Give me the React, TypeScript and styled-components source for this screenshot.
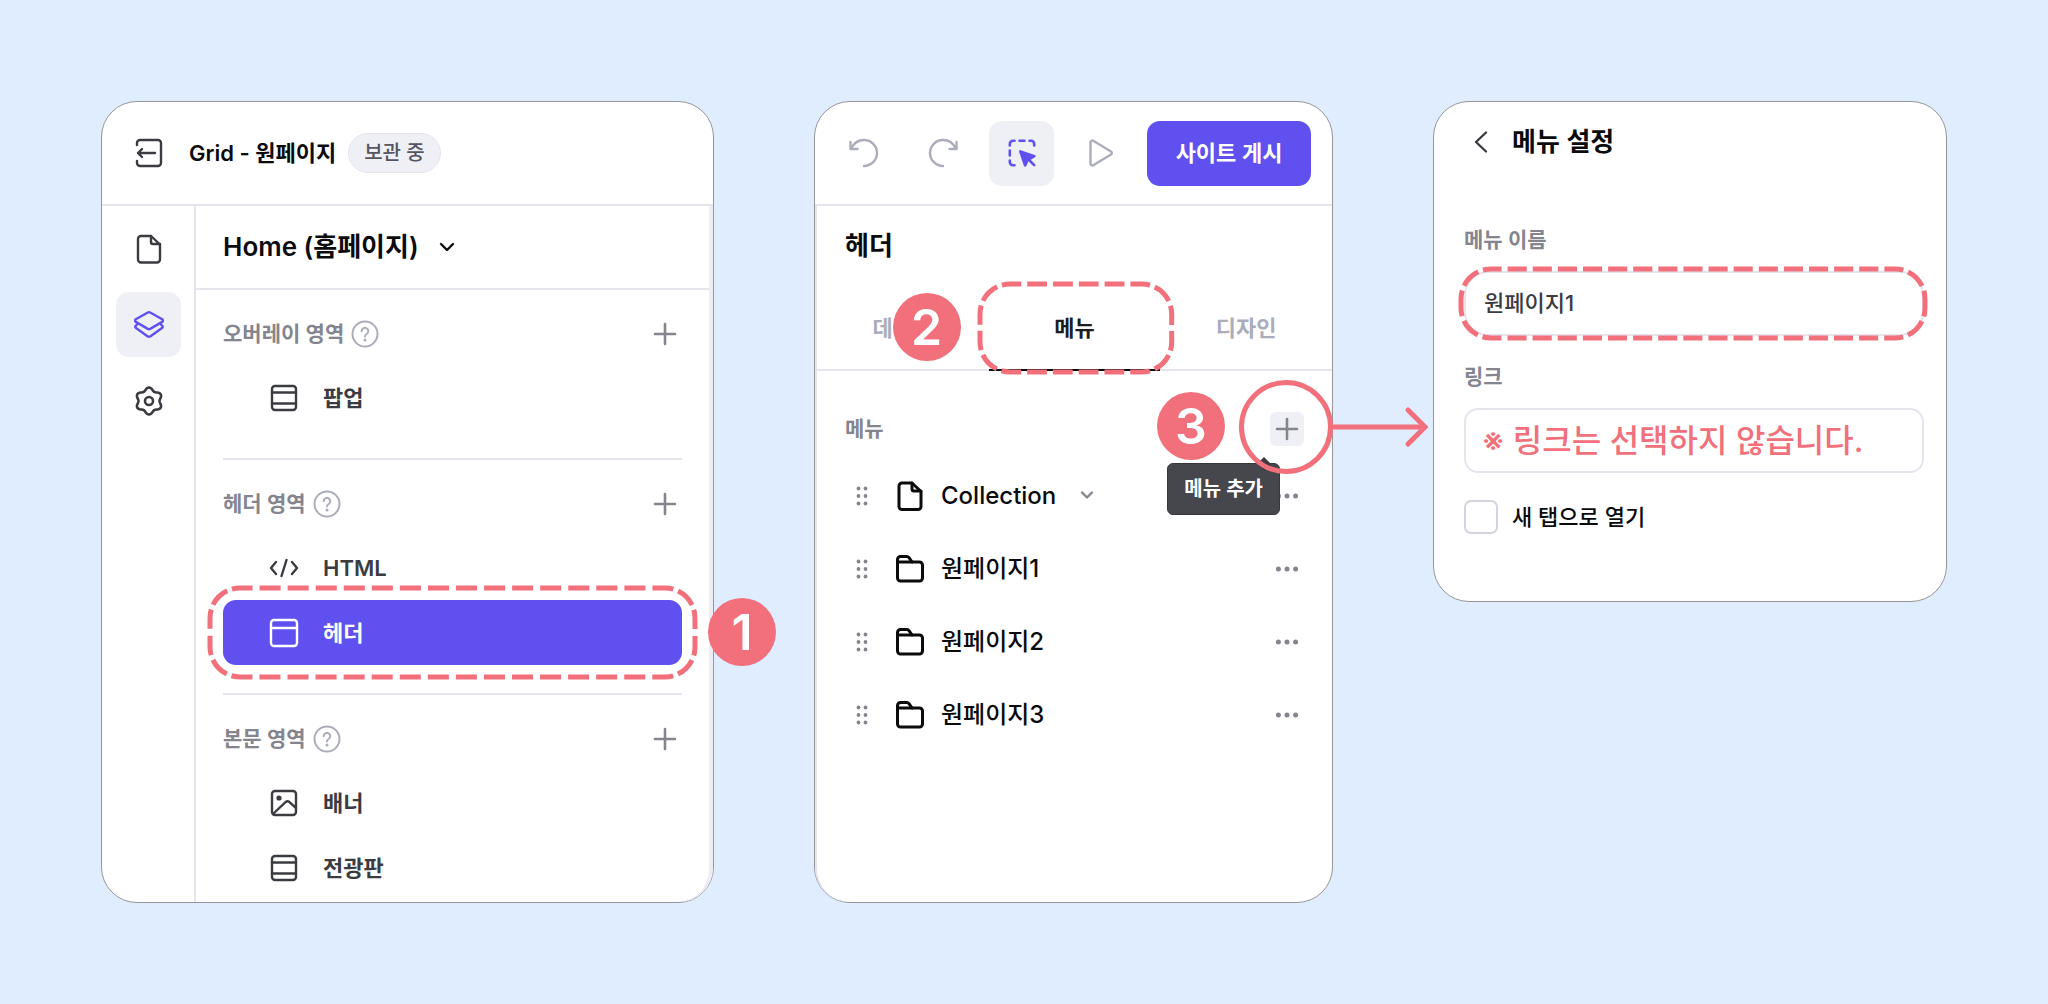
import React from "react";
import styled, { createGlobalStyle, css } from "styled-components";

const color = {
  page: "#e0edff",
  ink: "#0b0b0d",
  text: "#3b3c42",
  muted: "#84858f",
  faint: "#abadbb",
  line: "#e6e5ee",
  soft: "#eff0f5",
  brand: "#5f50ef",
  mark: "#f1707b",
  frame: "#969696",
};

const GlobalStyle = createGlobalStyle`
  *, *::before, *::after { box-sizing: border-box; }
  body {
    margin: 0;
    background: ${color.page};
    color: ${color.ink};
    font-family: Inter, "Noto Sans CJK KR", sans-serif;
    font-size: 22px;
    line-height: 32px;
  }
  button, input, select { font: inherit; color: inherit; }
  button { padding: 0; border: 0; background: none; cursor: pointer; }
  h1, h2, h3, p, ul { margin: 0; padding: 0; font: inherit; }
  ul { list-style: none; }
  svg { display: block; flex: none; }
`;

/* ---------- icons ---------- */

const gearOutline = (() => {
  const points: string[] = [];
  for (let i = 0; i < 120; i++) {
    const a = (i / 120) * Math.PI * 2;
    const r = 12 + 1.5 * Math.cos(6 * a);
    points.push(`${(15 + r * Math.sin(a)).toFixed(2)} ${(15 - r * Math.cos(a)).toFixed(2)}`);
  }
  return `M${points.join("L")}Z`;
})();

const glyphs = {
  exit: (
    <>
      <path d="M3 7V5a3 3 0 0 1 3-3h18a3 3 0 0 1 3 3v20a3 3 0 0 1-3 3H6a3 3 0 0 1-3-3v-2" />
      <path d="M21 15H4M8 11l-4 4 4 4" />
    </>
  ),
  page: (
    <>
      <path d="M7 2h10l9 8.500v15a3 3 0 0 1-3 3H7a3 3 0 0 1-3-3V5a3 3 0 0 1 3-3Z" />
      <path d="M17 2v6a2 2 0 0 0 2 2h7" />
    </>
  ),
  layers: (
    <>
      <path d="M13.800 2.500a2.500 2.500 0 0 1 2.400 0l12 6.800a1.500 1.500 0 0 1 0 2.600l-12 7a2.500 2.500 0 0 1-2.400 0l-12-7a1.500 1.500 0 0 1 0-2.600Z" />
      <path d="M3 14.500l-1.300 1.300a1.500 1.500 0 0 0 .3 2.300l11.800 8.400a2.500 2.500 0 0 0 2.400 0L28 18.100a1.500 1.500 0 0 0 .3-2.300L27 14.500" />
    </>
  ),
  gear: (
    <>
      <path d={gearOutline} />
      <circle cx="15" cy="15" r="4" />
    </>
  ),
  rows: (
    <>
      <rect x="3" y="3" width="24" height="24" rx="3" />
      <path d="M3 9.500h24M3 20.500h24" />
    </>
  ),
  header: (
    <>
      <rect x="2" y="2" width="26" height="26" rx="3" />
      <path d="M2 10h26" />
    </>
  ),
  image: (
    <>
      <rect x="3" y="3" width="24" height="24" rx="3" />
      <circle cx="10" cy="10" r="1.400" fill="currentColor" />
      <path d="M4 26L16.500 14.200a3 3 0 0 1 4 0L27 20" />
    </>
  ),
  code: <path d="M7 9l-5 6 5 6M17.500 7l-5 16M23 9l5 6-5 6" />,
  plus: <path d="M15 5v20M5 15h20" />,
  down: <path d="M9 12l6 6 6-6" />,
  downSmall: <path d="M10 11.500l5 5 5-5" />,
  back: <path d="M20 5.500L10 15l10 9.500" />,
  help: (
    <>
      <circle cx="15" cy="15" r="12.500" />
      <path d="M11.700 12.200a3.300 3.300 0 1 1 5 2.800c-1.200.7-1.700 1.200-1.700 2.500" />
      <circle cx="15" cy="21" r="1.500" fill="currentColor" stroke="none" />
    </>
  ),
  undo: (
    <>
      <path d="M2.500 10.500C5 4.500 10 2 15 2a13 13 0 0 1 0 26" />
      <path d="M1.500 4v7h7" />
    </>
  ),
  redo: (
    <>
      <path d="M27.500 10.500C25 4.500 20 2 15 2a13 13 0 0 0 0 26" />
      <path d="M28.500 4v7h-7" />
    </>
  ),
  select: (
    <>
      <path d="M2.800 7.500V6a3.200 3.200 0 0 1 3.200-3.200h1.500M12.500 2.800h5M22.500 2.800H24a3.200 3.200 0 0 1 3.200 3.200v1.500M2.800 12.500v5M2.800 22.500V24a3.200 3.200 0 0 0 3.200 3.200h1.500" />
      <path
        d="M13.300 13.400l14 4.800-4.500 2.600-2 .8-2.700 5.800Z"
        fill="currentColor"
      />
      <path d="M22 22l5.200 5.200" />
    </>
  ),
  play: <path d="M4.500 4.200a1.800 1.800 0 0 1 2.700-1.500l17.800 10.800a1.800 1.800 0 0 1 0 3L7.200 27.300a1.800 1.800 0 0 1-2.700-1.500Z" />,
  folder: (
    <>
      <path d="M2.500 8V5.500a3 3 0 0 1 3-3h6.200a3 3 0 0 1 2.500 1.300L17 8" />
      <path d="M2.500 8h22a3 3 0 0 1 3 3v13a3 3 0 0 1-3 3h-19a3 3 0 0 1-3-3Z" />
    </>
  ),
  grip: (
    <g fill="currentColor" stroke="none">
      {[7.5, 15, 22.5].map((y) => (
        <React.Fragment key={y}>
          <circle cx="11.500" cy={y} r="1.900" />
          <circle cx="18.500" cy={y} r="1.900" />
        </React.Fragment>
      ))}
    </g>
  ),
  more: (
    <g fill="currentColor" stroke="none">
      {[6.4, 15, 23.6].map((x) => (
        <circle key={x} cx={x} cy="15" r="2.500" />
      ))}
    </g>
  ),
};

type IconName = keyof typeof glyphs;

const Icon = ({ name, stroke = 2.4 }: { name: IconName; stroke?: number }) => (
  <svg
    width="30"
    height="30"
    viewBox="0 0 30 30"
    fill="none"
    stroke="currentColor"
    strokeWidth={stroke}
    strokeLinecap="round"
    strokeLinejoin="round"
    aria-hidden="true"
  >
    {glyphs[name]}
  </svg>
);

/* ---------- annotations ---------- */

const OutlineFrame = styled.span<{ $inset: string }>`
  position: absolute;
  inset: ${(p) => p.$inset};
  z-index: 2;
  pointer-events: none;
  svg {
    width: 100%;
    height: 100%;
    overflow: visible;
  }
`;

interface OutlineProps {
  w: number;
  h: number;
  across: number;
  down: number;
  gap: number;
  inset: string;
}

/* Dashed rounded frame whose dashes are balanced on each side and each corner. */
const Outline = ({ w, h, across, down, gap, inset }: OutlineProps) => {
  const r = 30;
  const over = 8.5;
  const cornerGap = 5;
  const run = (length: number, n: number) => {
    const dash = (length - (n - 1) * gap) / n;
    return Array.from({ length: n * 2 - 1 }, (_, i) => (i % 2 ? gap : dash));
  };
  const corner = [cornerGap, (Math.PI * r) / 2 - 2 * over - 2 * cornerGap, cornerGap];
  const half = [
    ...run(w - 2 * r + 2 * over, across),
    ...corner,
    ...run(h - 2 * r + 2 * over, down),
    ...corner,
  ];
  return (
    <OutlineFrame $inset={inset}>
      <svg
        viewBox={`0 0 ${w} ${h}`}
        preserveAspectRatio="none"
        fill="none"
        stroke={color.mark}
        strokeWidth="5"
        aria-hidden="true"
      >
        <path
          d={`M${r} 0H${w - r}A${r} ${r} 0 0 1 ${w} ${r}V${h - r}A${r} ${r} 0 0 1 ${w - r} ${h}H${r}A${r} ${r} 0 0 1 0 ${h - r}V${r}A${r} ${r} 0 0 1 ${r} 0Z`}
          strokeDasharray={[...half, ...half].join(" ")}
          strokeDashoffset={over}
        />
      </svg>
    </OutlineFrame>
  );
};

const StepBadge = styled.span<{ $place: string }>`
  position: absolute;
  inset: ${(p) => p.$place};
  z-index: 3;
  display: grid;
  place-items: center;
  width: 68px;
  height: 68px;
  border-radius: 50%;
  background: ${color.mark};
  color: #fff;
  font-size: 50px;
  line-height: 68px;
  font-weight: 600;
`;

const Ring = styled.span`
  position: absolute;
  top: -32px;
  left: -31px;
  z-index: 3;
  width: 94px;
  height: 94px;
  border: 5px solid ${color.mark};
  border-radius: 50%;
  pointer-events: none;
`;

const ArrowSvg = styled.svg`
  position: absolute;
  top: -8px;
  left: 61px;
  z-index: 3;
  pointer-events: none;
`;

/* ---------- shared layout ---------- */

const Board = styled.main`
  display: grid;
  grid-template-columns: 613fr 519fr 514fr;
  gap: 100px;
  align-content: start;
  min-height: 100vh;
  padding: 101px;
`;

const Panel = styled.section<{ $hug?: boolean }>`
  display: flex;
  flex-direction: column;
  align-self: ${(p) => (p.$hug ? "start" : "stretch")};
  min-width: 0;
  border: 1px solid ${color.frame};
  border-radius: 36px;
  background: #fff;
`;

const TopBar = styled.header`
  display: flex;
  align-items: center;
  height: 104px;
  border-bottom: 2px solid ${color.line};
`;

const Square = styled.button<{ $active?: boolean; $tone?: string }>`
  display: grid;
  place-items: center;
  flex: none;
  width: 65px;
  height: 65px;
  border-radius: 13px;
  color: ${(p) => p.$tone ?? color.text};
  ${(p) =>
    p.$active &&
    css`
      background: ${color.soft};
      color: ${color.brand};
    `}
`;

const SmallButton = styled.button<{ $filled?: boolean }>`
  display: grid;
  place-items: center;
  flex: none;
  width: 34px;
  height: 34px;
  border-radius: 6px;
  background: ${(p) => (p.$filled ? color.soft : "none")};
  color: ${color.muted};
`;

const Title = styled.h2`
  font-size: 26px;
  font-weight: 600;
`;

const Caption = styled.h3`
  font-size: 21px;
  font-weight: 600;
  color: ${color.muted};
`;

/* ---------- layers panel ---------- */

const SiteBar = styled(TopBar)`
  padding: 0 14px;
`;

const SiteName = styled.h1`
  margin-left: 8px;
  font-weight: 600;
`;

const StatusPill = styled.span`
  margin-left: 12px;
  padding: 3px 15px;
  border: 1px solid ${color.line};
  border-radius: 21px;
  background: ${color.soft};
  color: #55565f;
  font-size: 20px;
  font-weight: 500;
`;

const Split = styled.div`
  display: flex;
  flex: 1;
`;

const Rail = styled.nav`
  display: flex;
  flex-direction: column;
  gap: 11px;
  width: 94px;
  padding: 10px 0 10px 14px;
  border-right: 2px solid ${color.line};
`;

const Layers = styled.div`
  flex: 1;
  min-width: 0;
  border-right: 4px solid #eeedf3;
  border-bottom-right-radius: 34px;
`;

const PagePicker = styled.button`
  display: flex;
  align-items: center;
  gap: 13px;
  width: 100%;
  height: 84px;
  padding: 0 27px;
  border-bottom: 2px solid ${color.line};
  font-size: 26px;
  font-weight: 600;
`;

const Group = styled.section`
  margin: 0 27px;
  padding: 27px 0 28px;
  border-bottom: 2px solid ${color.line};
  &:last-child {
    padding-bottom: 2px;
    border-bottom: 0;
  }
`;

const GroupHead = styled.div`
  display: flex;
  align-items: center;
  gap: 6px;
  margin-bottom: 14px;
  color: ${color.faint};
  ${SmallButton} {
    margin-left: auto;
  }
`;

const LayerItem = styled.li`
  position: relative;
`;

const LayerButton = styled.button<{ $active?: boolean }>`
  display: flex;
  align-items: center;
  gap: 24px;
  width: 100%;
  height: 65px;
  padding-left: 46px;
  border-radius: 13px;
  background: ${(p) => (p.$active ? color.brand : "none")};
  color: ${(p) => (p.$active ? "#fff" : color.text)};
  font-weight: 600;
`;

interface Layer {
  icon: IconName;
  label: string;
  active?: boolean;
}

const groups: { title: string; layers: Layer[] }[] = [
  { title: "오버레이 영역", layers: [{ icon: "rows", label: "팝업" }] },
  {
    title: "헤더 영역",
    layers: [
      { icon: "code", label: "HTML" },
      { icon: "header", label: "헤더", active: true },
    ],
  },
  {
    title: "본문 영역",
    layers: [
      { icon: "image", label: "배너" },
      { icon: "rows", label: "전광판" },
    ],
  },
];

const LayersPanel = () => (
  <Panel>
    <SiteBar>
      <Square aria-label="나가기">
        <Icon name="exit" />
      </Square>
      <SiteName>Grid - 원페이지</SiteName>
      <StatusPill>보관 중</StatusPill>
    </SiteBar>
    <Split>
      <Rail>
        <Square aria-label="페이지">
          <Icon name="page" />
        </Square>
        <Square $active aria-label="레이어">
          <Icon name="layers" />
        </Square>
        <Square aria-label="설정">
          <Icon name="gear" stroke={2.6} />
        </Square>
      </Rail>
      <Layers>
        <PagePicker>
          Home (홈페이지)
          <Icon name="down" />
        </PagePicker>
        {groups.map((group) => (
          <Group key={group.title}>
            <GroupHead>
              <Caption>{group.title}</Caption>
              <Icon name="help" stroke={2} />
              <SmallButton aria-label={`${group.title} 추가`}>
                <Icon name="plus" stroke={2.6} />
              </SmallButton>
            </GroupHead>
            <ul>
              {group.layers.map((layer) => (
                <LayerItem key={layer.label}>
                  <LayerButton $active={layer.active}>
                    <Icon name={layer.icon} />
                    {layer.label}
                  </LayerButton>
                  {layer.active && (
                    <>
                      <Outline w={485} h={89} across={16} down={2} gap={7} inset="-12px -13px" />
                      <StepBadge $place="-2px -94px auto auto">1</StepBadge>
                    </>
                  )}
                </LayerItem>
              ))}
            </ul>
          </Group>
        ))}
      </Layers>
    </Split>
  </Panel>
);

/* ---------- header menu panel ---------- */

const ToolBar = styled(TopBar)`
  gap: 14px;
  padding: 0 21px 0 16px;
`;

const PublishButton = styled.button`
  flex: none;
  width: 164px;
  height: 65px;
  margin-left: auto;
  border-radius: 13px;
  background: ${color.brand};
  color: #fff;
  font-weight: 600;
`;

const Inspector = styled.div`
  flex: 1;
  border-left: 2px solid ${color.line};
  border-bottom-left-radius: 34px;
`;

const InspectorTitle = styled(Title)`
  padding: 24px 28px;
`;

const Tabs = styled.div`
  display: grid;
  grid-template-columns: repeat(3, 1fr);
  height: 85px;
  border-bottom: 2px solid ${color.line};
`;

const TabCell = styled.div`
  position: relative;
  display: grid;
  margin-bottom: -2px;
`;

const Tab = styled.button<{ $active?: boolean }>`
  border-bottom: 2px solid ${(p) => (p.$active ? color.ink : "transparent")};
  color: ${(p) => (p.$active ? "#1c1d21" : color.faint)};
  font-weight: 600;
`;

const MenuHead = styled.div`
  display: flex;
  align-items: center;
  justify-content: space-between;
  padding: 41px 28px 13px;
`;

const AddSpot = styled.div`
  position: relative;
`;

const Tooltip = styled.div`
  position: absolute;
  top: 51px;
  right: 24px;
  z-index: 2;
  padding: 9px 16px;
  border: 1px solid #36373c;
  border-radius: 6px;
  background: #46474c;
  color: #fff;
  font-size: 20px;
  font-weight: 600;
  white-space: nowrap;
  &::before {
    content: "";
    position: absolute;
    top: -5px;
    right: 10px;
    width: 10px;
    height: 10px;
    background: #3c3d42;
    transform: rotate(45deg);
  }
`;

const MenuRow = styled.li`
  display: flex;
  align-items: center;
  gap: 16px;
  height: 73px;
  padding: 0 28px;
  font-size: 24px;
  font-weight: 500;
`;

const Grip = styled.span`
  display: grid;
  place-items: center;
  width: 34px;
  color: ${color.muted};
`;

const MenuName = styled.span`
  display: flex;
  align-items: center;
  gap: 16px;
  flex: 1;
  svg {
    color: ${color.muted};
  }
`;

const menus: { icon: IconName; label: string; nested?: boolean }[] = [
  { icon: "page", label: "Collection", nested: true },
  { icon: "folder", label: "원페이지1" },
  { icon: "folder", label: "원페이지2" },
  { icon: "folder", label: "원페이지3" },
];

const MenuPanel = () => (
  <Panel>
    <ToolBar>
      <Square $tone={color.faint} aria-label="실행 취소">
        <Icon name="undo" />
      </Square>
      <Square $tone={color.faint} aria-label="다시 실행">
        <Icon name="redo" />
      </Square>
      <Square $active aria-label="선택">
        <Icon name="select" stroke={2.6} />
      </Square>
      <Square $tone={color.faint} aria-label="미리보기">
        <Icon name="play" />
      </Square>
      <PublishButton>사이트 게시</PublishButton>
    </ToolBar>
    <Inspector>
      <InspectorTitle>헤더</InspectorTitle>
      <Tabs role="tablist">
        <TabCell>
          <Tab role="tab">데이터</Tab>
          <StepBadge $place="7px 28px auto auto">2</StepBadge>
        </TabCell>
        <TabCell>
          <Tab role="tab" aria-selected $active>
            메뉴
          </Tab>
          <Outline w={192} h={88} across={6} down={2} gap={6} inset="-2px -11px -1px -9px" />
        </TabCell>
        <TabCell>
          <Tab role="tab">디자인</Tab>
        </TabCell>
      </Tabs>
      <MenuHead>
        <Caption>메뉴</Caption>
        <AddSpot>
          <SmallButton $filled aria-label="메뉴 추가">
            <Icon name="plus" stroke={2.6} />
          </SmallButton>
          <Tooltip role="tooltip">메뉴 추가</Tooltip>
          <StepBadge $place="-20px auto auto -113px">3</StepBadge>
          <Ring />
          <ArrowSvg
            width="100"
            height="46"
            viewBox="0 0 100 46"
            fill="none"
            stroke={color.mark}
            strokeWidth="5"
            strokeLinecap="round"
            aria-hidden="true"
          >
            <path d="M3 23H92" />
            <path d="M77 6l17 17-17 17" />
          </ArrowSvg>
        </AddSpot>
      </MenuHead>
      <ul>
        {menus.map((menu) => (
          <MenuRow key={menu.label}>
            <Grip>
              <Icon name="grip" />
            </Grip>
            <Icon name={menu.icon} stroke={3} />
            <MenuName>
              {menu.label}
              {menu.nested && <Icon name="downSmall" />}
            </MenuName>
            <SmallButton aria-label={`${menu.label} 더보기`}>
              <Icon name="more" />
            </SmallButton>
          </MenuRow>
        ))}
      </ul>
    </Inspector>
  </Panel>
);

/* ---------- menu settings panel ---------- */

const SettingsHead = styled.header`
  display: flex;
  align-items: center;
  gap: 14px;
  height: 80px;
  padding: 0 30px;
  ${SmallButton} {
    color: ${color.text};
  }
`;

const Form = styled.form`
  display: flex;
  flex-direction: column;
  gap: 25px;
  padding: 42px 22px 67px 30px;
`;

const Field = styled.div`
  display: flex;
  flex-direction: column;
  gap: 15px;
`;

const FieldLabel = styled.label`
  font-size: 21px;
  font-weight: 600;
  color: ${color.muted};
`;

const Control = styled.div`
  position: relative;
  display: grid;
`;

const box = css`
  width: 100%;
  height: 65px;
  border: 2px solid ${color.line};
  border-radius: 14px;
  background: #fff;
  outline: 0;
`;

const TextBox = styled.input`
  ${box}
  padding: 0 18px 5px;
  border-radius: 24px;
  color: ${color.text};
  font-weight: 500;
`;

const LinkSelect = styled.select`
  ${box}
  padding: 0 16px;
  appearance: none;
  color: ${color.mark};
  font-size: 32px;
  font-weight: 500;
`;

const CheckRow = styled.div`
  display: flex;
  align-items: center;
  gap: 14px;
  padding-top: 2px;
`;

const CheckBox = styled.input`
  appearance: none;
  flex: none;
  width: 34px;
  height: 34px;
  margin: 0;
  border: 2px solid #d3d3dd;
  border-radius: 7px;
  background: #fff;
`;

const CheckLabel = styled.label`
  font-weight: 500;
`;

const SettingsPanel = () => (
  <Panel $hug>
    <SettingsHead>
      <SmallButton aria-label="뒤로">
        <Icon name="back" />
      </SmallButton>
      <Title>메뉴 설정</Title>
    </SettingsHead>
    <Form>
      <Field>
        <FieldLabel htmlFor="menu-name">메뉴 이름</FieldLabel>
        <Control>
          <TextBox id="menu-name" type="text" defaultValue="원페이지1" />
          <Outline w={463} h={69} across={17} down={1} gap={6} inset="-2px -1px -2px -3px" />
        </Control>
      </Field>
      <Field>
        <FieldLabel htmlFor="menu-link">링크</FieldLabel>
        <Control>
          <LinkSelect id="menu-link">
            <option>※ 링크는 선택하지 않습니다.</option>
          </LinkSelect>
        </Control>
      </Field>
      <CheckRow>
        <CheckBox id="new-tab" type="checkbox" />
        <CheckLabel htmlFor="new-tab">새 탭으로 열기</CheckLabel>
      </CheckRow>
    </Form>
  </Panel>
);

const App = () => (
  <>
    <GlobalStyle />
    <Board>
      <LayersPanel />
      <MenuPanel />
      <SettingsPanel />
    </Board>
  </>
);

export default App;
